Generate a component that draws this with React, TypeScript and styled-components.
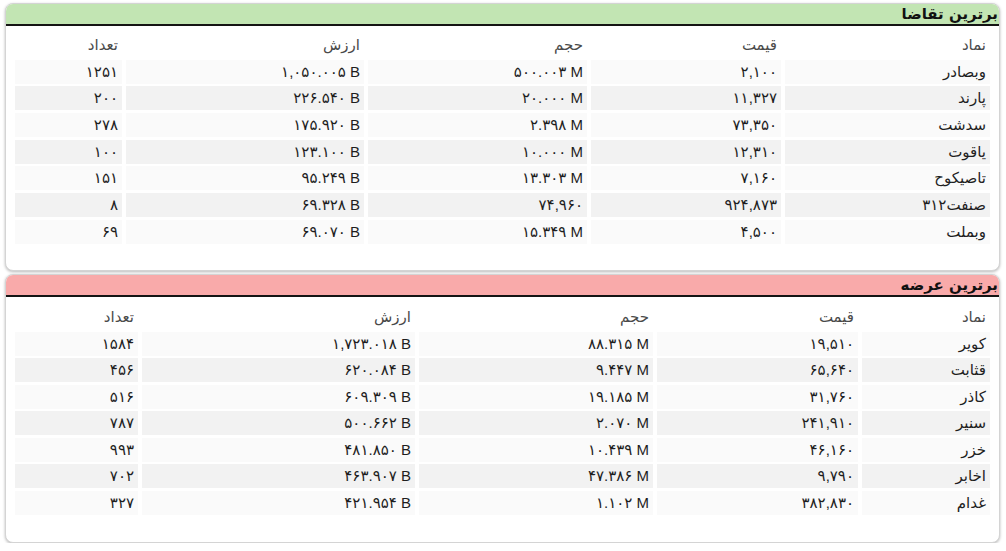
import React from "react";
import styled, { createGlobalStyle } from "styled-components";

const GlobalStyle = createGlobalStyle`
  html, body { margin: 0; padding: 0; background: #ffffff; }
  body { font-family: "Liberation Sans", "DejaVu Sans", sans-serif; }
`;

const Page = styled.div`
  direction: rtl;
  display: flex;
  flex-direction: column;
  gap: 3px;
  padding: 3px 6px 0 5px;
`;

const Panel = styled.section<{ $pb: number }>`
  background: #ffffff;
  border: 1px solid #d4d4d4;
  border-radius: 8px;
  box-shadow: 0 1px 3px rgba(0, 0, 0, 0.28);
  overflow: hidden;
  padding-bottom: ${(p) => p.$pb}px;
`;

const PanelTitle = styled.h2<{ $bg: string }>`
  margin: 0;
  height: 20px;
  line-height: 20px;
  background: ${(p) => p.$bg};
  border-bottom: 2px solid #141414;
  padding-right: 1px;
  font-family: "DejaVu Sans", sans-serif;
  font-size: 15px;
  font-weight: bold;
  color: #111;
  text-align: right;
`;

const Table = styled.div<{ $cols: string; $mt: number; $gap: number }>`
  display: grid;
  grid-template-columns: ${(p) => p.$cols};
  grid-auto-rows: 24px;
  column-gap: 4px;
  row-gap: ${(p) => p.$gap}px;
  margin: ${(p) => p.$mt}px 9px 0 9px;
`;

type Kind = "head" | "odd" | "even";

const Cell = styled.div<{ $kind: Kind; $ltr?: boolean }>`
  display: flex;
  align-items: center;
  justify-content: ${(p) => (p.$ltr ? "flex-end" : "flex-start")};
  direction: ${(p) => (p.$ltr ? "ltr" : "rtl")};
  padding: 0 4px;
  background: ${(p) =>
    p.$kind === "head" ? "#ffffff" : p.$kind === "odd" ? "#fafafa" : "#f2f2f2"};
  color: ${(p) => (p.$kind === "head" ? "#4a4a4a" : "#1e1e1e")};
  font-size: 15px;
  white-space: nowrap;
`;

type Row = [string, string, string, string, string];

const heads: Row = ["نماد", "قیمت", "حجم", "ارزش", "تعداد"];

const demand: Row[] = [
  ["وبصادر", "۲,۱۰۰", "۵۰۰.۰۰۳ M", "۱,۰۵۰.۰۰۵ B", "۱۲۵۱"],
  ["پارند", "۱۱,۳۲۷", "۲۰.۰۰۰ M", "۲۲۶.۵۴۰ B", "۲۰۰"],
  ["سدشت", "۷۳,۳۵۰", "۲.۳۹۸ M", "۱۷۵.۹۲۰ B", "۲۷۸"],
  ["یاقوت", "۱۲,۳۱۰", "۱۰.۰۰۰ M", "۱۲۳.۱۰۰ B", "۱۰۰"],
  ["تاصیکوح", "۷,۱۶۰", "۱۳.۳۰۳ M", "۹۵.۲۴۹ B", "۱۵۱"],
  ["صنفت۳۱۲", "۹۲۴,۸۷۳", "۷۴,۹۶۰", "۶۹.۳۲۸ B", "۸"],
  ["وبملت", "۴,۵۰۰", "۱۵.۳۴۹ M", "۶۹.۰۷۰ B", "۶۹"],
];

const supply: Row[] = [
  ["کویر", "۱۹,۵۱۰", "۸۸.۳۱۵ M", "۱,۷۲۳.۰۱۸ B", "۱۵۸۴"],
  ["قثابت", "۶۵,۶۴۰", "۹.۴۴۷ M", "۶۲۰.۰۸۴ B", "۴۵۶"],
  ["کاذر", "۳۱,۷۶۰", "۱۹.۱۸۵ M", "۶۰۹.۳۰۹ B", "۵۱۶"],
  ["سنیر", "۲۴۱,۹۱۰", "۲.۰۷۰ M", "۵۰۰.۶۶۲ B", "۷۸۷"],
  ["خزر", "۴۶,۱۶۰", "۱۰.۴۳۹ M", "۴۸۱.۸۵۰ B", "۹۹۳"],
  ["اخابر", "۹,۷۹۰", "۴۷.۳۸۶ M", "۴۶۳.۹۰۷ B", "۷۰۲"],
  ["غدام", "۳۸۲,۸۳۰", "۱.۱۰۲ M", "۴۲۱.۹۵۴ B", "۳۲۷"],
];

function DataPanel(props: {
  title: string;
  bg: string;
  cols: string;
  rows: Row[];
  mt: number;
  gap: number;
  pb: number;
}) {
  return (
    <Panel $pb={props.pb}>
      <PanelTitle $bg={props.bg}>{props.title}</PanelTitle>
      <Table $cols={props.cols} $mt={props.mt} $gap={props.gap}>
        {heads.map((h, i) => (
          <Cell key={"h" + i} $kind="head">
            {h}
          </Cell>
        ))}
        {props.rows.map((r, ri) =>
          r.map((v, ci) => (
            <Cell key={ri + "-" + ci} $kind={ri % 2 === 0 ? "odd" : "even"} $ltr={ci > 0}>
              {v}
            </Cell>
          ))
        )}
      </Table>
    </Panel>
  );
}

export default function App() {
  return (
    <>
      <GlobalStyle />
      <Page>
        <DataPanel
          title="برترین تقاضا"
          bg="#c2e5b3"
          cols="205px 190px 219px 238px 107px"
          rows={demand}
          mt={7}
          gap={2.67}
          pb={26}
        />
        <DataPanel
          title="برترین عرضه"
          bg="#f9aaaa"
          cols="128px 201px 234px 273px 123px"
          rows={supply}
          mt={8.5}
          gap={2.5}
          pb={27}
        />
      </Page>
    </>
  );
}
